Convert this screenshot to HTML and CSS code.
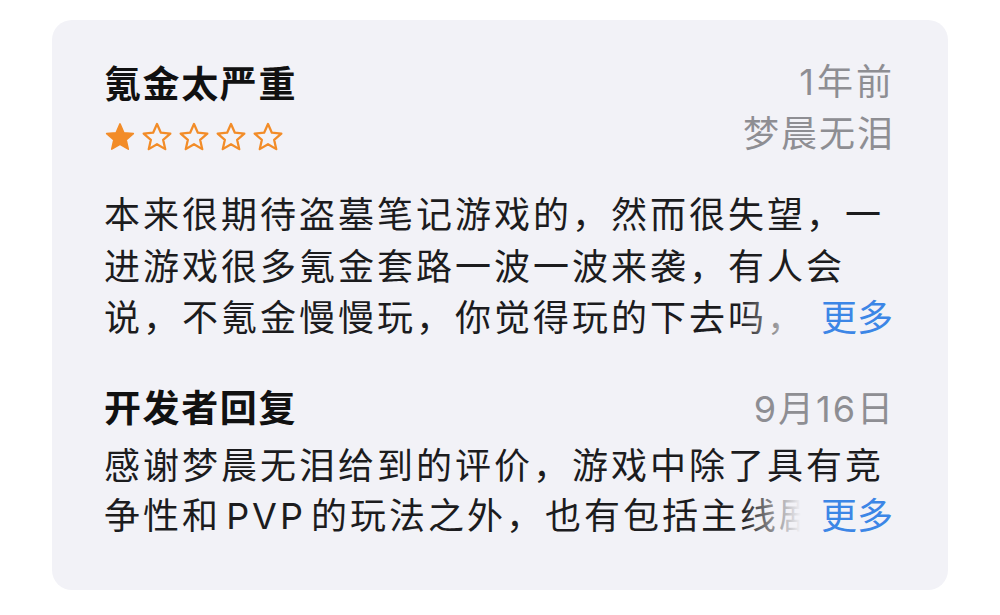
FILE: index.html
```html
<!DOCTYPE html>
<html lang="zh-CN">

<head>
    <meta charset="UTF-8">
    <meta name="viewport" content="width=device-width, initial-scale=1.0">
    <title>评论</title>
    <link rel="stylesheet" href="styles.css">
</head>

<body>
    <div class="card">
        <div class="review-head">
            <div class="head-left">
                <h2 class="title">氪金太严重</h2>
                <div class="stars">
                    <svg class="star" viewBox="0 0 24 24"><path class="filled" d="M12 2.2l2.9 6.6 7.1.6-5.4 4.7 1.6 7-6.2-3.7-6.2 3.7 1.6-7L2 9.4l7.1-.6z"/></svg>
                    <svg class="star" viewBox="0 0 24 24"><path class="empty" d="M12 2.2l2.9 6.6 7.1.6-5.4 4.7 1.6 7-6.2-3.7-6.2 3.7 1.6-7L2 9.4l7.1-.6z"/></svg>
                    <svg class="star" viewBox="0 0 24 24"><path class="empty" d="M12 2.2l2.9 6.6 7.1.6-5.4 4.7 1.6 7-6.2-3.7-6.2 3.7 1.6-7L2 9.4l7.1-.6z"/></svg>
                    <svg class="star" viewBox="0 0 24 24"><path class="empty" d="M12 2.2l2.9 6.6 7.1.6-5.4 4.7 1.6 7-6.2-3.7-6.2 3.7 1.6-7L2 9.4l7.1-.6z"/></svg>
                    <svg class="star" viewBox="0 0 24 24"><path class="empty" d="M12 2.2l2.9 6.6 7.1.6-5.4 4.7 1.6 7-6.2-3.7-6.2 3.7 1.6-7L2 9.4l7.1-.6z"/></svg>
                </div>
            </div>
            <div class="head-right">
                <div class="meta">1年前</div>
                <div class="meta">梦晨无泪</div>
            </div>
        </div>

        <div class="text review-text">本来很期待盗墓笔记游戏的，然而很失望，一进游戏很多氪金套路一波一波来袭，有人会说，不氪金慢慢玩，你觉得玩的下去吗，<span class="more">更多</span></div>

        <div class="reply-head">
            <h3 class="title">开发者回复</h3>
            <div class="meta">9月16日</div>
        </div>

        <div class="text reply-text">感谢梦晨无泪给到的评价，游戏中除了具有竞争性和 PVP 的玩法之外，也有包括主线剧<span class="more">更多</span></div>
    </div>
</body>

</html>
```

FILE: styles.css
```css
* {
    box-sizing: border-box;
    margin: 0;
    padding: 0;
}

body {
    font-family: Inter, "Noto Sans CJK SC", sans-serif;
    background-color: #fff;
    color: #1c1c1e;
    padding: 20px 52px 0;
}

.card {
    background-color: #f2f2f7;
    border-radius: 20px;
    padding: 39px 55px 48px 52px;
    height: 570px;
}

.review-head {
    display: flex;
    justify-content: space-between;
}

.title {
    font-size: 37px;
    font-weight: 700;
    letter-spacing: 1.6px;
    line-height: 52px;
    color: #111;
}

.stars {
    display: flex;
    align-items: center;
    gap: 5px;
    height: 52px;
}

.star {
    width: 32px;
    height: 32px;
}

.star .filled {
    fill: #f28c28;
    stroke: #f28c28;
    stroke-width: 1.2;
    stroke-linejoin: round;
}

.star .empty {
    fill: none;
    stroke: #f28c28;
    stroke-width: 1.7;
    stroke-linejoin: round;
}

.head-right {
    display: flex;
    flex-direction: column;
    align-items: flex-end;
}

.meta {
    font-size: 36px;
    letter-spacing: 2px;
    margin-right: -2px;
    line-height: 52px;
    color: #8e8e93;
}

.head-right .meta:first-child {
    margin-top: -3px;
    letter-spacing: 3px;
}

.text {
    position: relative;
    font-size: 36px;
    letter-spacing: 3px;
    word-spacing: -8px;
    overflow: hidden;
    color: #1c1c1e;
}

.review-text {
    margin-top: 27px;
    line-height: 51.5px;
    height: 154.5px;
}

.reply-head {
    display: flex;
    justify-content: space-between;
    align-items: center;
    margin-top: 38px;
}

.reply-text {
    margin-top: 6px;
    line-height: 50px;
    height: 100px;
}

.more {
    position: absolute;
    right: 0;
    bottom: 0;
    letter-spacing: 0;
    color: #3c86e6;
    background-color: #f2f2f7;
}

.more::before {
    content: "";
    position: absolute;
    top: 0;
    bottom: 0;
    right: 100%;
    width: 80px;
    background: linear-gradient(to right, rgba(242, 242, 247, 0), rgba(242, 242, 247, 0.6) 45%, #f2f2f7 75%);
}
```
